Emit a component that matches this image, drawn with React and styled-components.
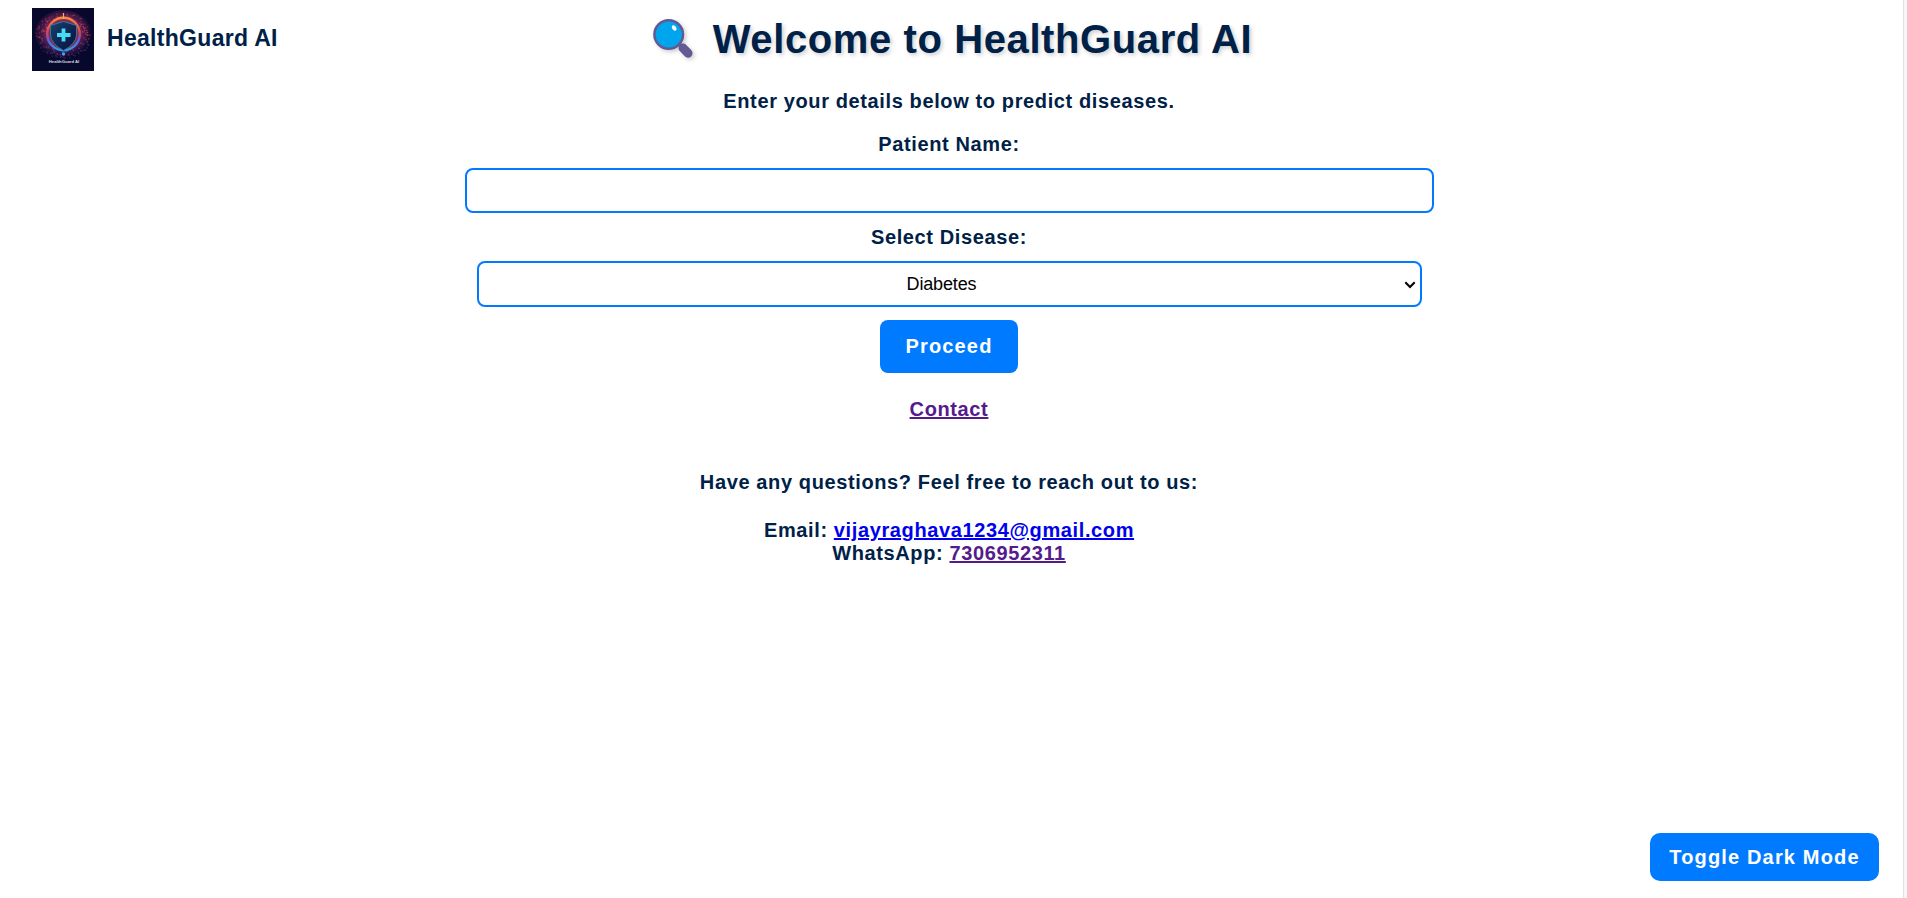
import React from "react";
import styled, { createGlobalStyle } from "styled-components";

const navy = "#002147";
const blue = "#007bff";

const GlobalStyle = createGlobalStyle`
  body {
    margin: 0;
    background: #fff;
    color: ${navy};
    font-family: "Liberation Sans", Arial, sans-serif;
    font-size: 20px;
    font-weight: bold;
    letter-spacing: 0.62px;
    line-height: 23px;
    overflow: hidden;
  }
`;

const Page = styled.div`
  display: flex;
  height: 898px;
`;

const Content = styled.main`
  flex: 1;
  display: flex;
  flex-direction: column;
  align-items: center;
  padding-right: 5px;
`;

const Gutter = styled.div`
  width: 4px;
  box-sizing: border-box;
  background: #f7f7f7;
  border-left: 1px solid #e2e2e2;
`;

const Header = styled.header`
  width: 100%;
  height: 90px;
  display: grid;
  grid-template-columns: 1fr auto 1fr;
  align-items: start;
`;

const Brand = styled.div`
  display: flex;
  align-items: flex-start;
  gap: 13px;
  padding: 8px 0 0 32px;
`;

const BrandName = styled.span`
  padding-top: 16px;
  font-size: 23px;
  line-height: 28px;
  letter-spacing: 0.3px;
`;

const Title = styled.h1`
  display: flex;
  gap: 20px;
  margin: 16px 0 0;
  padding-left: 7px;
  font-size: 40px;
  line-height: 46px;
  letter-spacing: 0.6px;
  text-shadow: 2px 2px 4px rgba(0, 0, 0, 0.2);
`;

const Lens = styled.svg`
  margin-top: 2px;
  overflow: visible;
  filter: drop-shadow(2px 2px 2px rgba(0, 0, 0, 0.2));
`;

const Text = styled.p`
  margin: 0 0 ${(p) => p.$gap}px;
  text-align: center;
`;

const Form = styled.form`
  width: 969px;
  display: flex;
  flex-direction: column;
  align-items: center;
`;

const Label = styled.label`
  margin-bottom: 12px;
`;

const Input = styled.input`
  box-sizing: border-box;
  width: 969px;
  height: 45px;
  margin: 0 0 13px;
  padding: 10px;
  border: 2px solid ${blue};
  border-radius: 8px;
  background: #fff;
  font: 18px "Liberation Sans", Arial, sans-serif;
  text-align: center;
  outline: none;
`;

const SelectBox = styled.div`
  position: relative;
  width: 945px;
  height: 46px;
  margin-bottom: 13px;
`;

const Select = styled.select`
  appearance: none;
  box-sizing: border-box;
  width: 100%;
  height: 100%;
  margin: 0;
  padding: 10px 25px 10px 10px;
  border: 2px solid ${blue};
  border-radius: 8px;
  background: #fff;
  color: #000;
  font: 18px "Liberation Sans", Arial, sans-serif;
  letter-spacing: -0.14px;
  text-align: center;
`;

const Chevron = styled.svg`
  position: absolute;
  right: 6px;
  top: 20px;
  pointer-events: none;
`;

const Button = styled.button`
  padding: 0;
  border: none;
  background: ${blue};
  color: #fff;
  font: bold 20px/23px "Liberation Sans", Arial, sans-serif;
  letter-spacing: 1.16px;
  cursor: pointer;
`;

const Proceed = styled(Button)`
  width: 138px;
  height: 53px;
  margin-bottom: 25px;
  border-radius: 8px;
`;

const Toggle = styled(Button)`
  position: fixed;
  right: 28px;
  bottom: 17px;
  width: 229px;
  height: 48px;
  border-radius: 10px;
`;

const Link = styled.a`
  color: ${(p) => (p.$seen ? "#551a8b" : "#0000ee")};
  text-decoration: underline;
`;

function Logo() {
  const sparks = [];
  for (let i = 0; i < 130; i++) {
    const a = i * 2.39996 + Math.sin(i * 5.3) * 0.4;
    const r = 17 + ((i * i * 7) % 23) * 0.5;
    const x = 31 + Math.cos(a) * r;
    const y = 27 + Math.sin(a) * r * 0.8;
    const warm = y < 33;
    sparks.push(
      <rect
        key={i}
        x={x.toFixed(1)}
        y={y.toFixed(1)}
        width="1.4"
        height="1.4"
        fill={warm ? (i % 2 ? "#e0484c" : "#a5305c") : i % 2 ? "#8a3590" : "#2d4eae"}
        opacity={r > 24 ? 0.45 : 0.75}
      />
    );
  }
  return (
    <svg width="62" height="63" viewBox="0 0 62 63">
      <defs>
        <radialGradient id="glow" cx="50%" cy="45%" r="50%">
          <stop offset="0.5" stopColor="#8d2d52" />
          <stop offset="0.7" stopColor="#4a1c4c" />
          <stop offset="1" stopColor="#07082b" />
        </radialGradient>
        <linearGradient id="ring" x1="0" y1="0" x2="0" y2="1">
          <stop offset="0" stopColor="#ff8a3c" />
          <stop offset="0.45" stopColor="#d8405c" />
          <stop offset="0.7" stopColor="#5a62df" />
          <stop offset="1" stopColor="#23a6f0" />
        </linearGradient>
        <linearGradient id="shield" x1="0" y1="0" x2="1" y2="1">
          <stop offset="0" stopColor="#17436b" />
          <stop offset="0.6" stopColor="#0e2150" />
          <stop offset="1" stopColor="#0a1238" />
        </linearGradient>
        <filter id="soft" x="-20%" y="-20%" width="140%" height="140%">
          <feGaussianBlur stdDeviation="0.7" />
        </filter>
      </defs>
      <rect width="62" height="63" fill="#07082b" />
      <ellipse cx="31" cy="27" rx="29" ry="25" fill="url(#glow)" />
      {sparks}
      <circle
        cx="31.5"
        cy="26"
        r="16.3"
        fill="#7c2f55"
        stroke="url(#ring)"
        strokeWidth="2.4"
        filter="url(#soft)"
      />
      <path d="M31.5 5v6" stroke="#ffae4d" strokeWidth="1.2" />
      <path
        d="M31.5 13.500L44.500 17.500V27Q44 36 31.500 42.500Q19 36 18.500 27V17.500Z"
        fill="url(#shield)"
        stroke="#33769b"
        strokeWidth="1"
      />
      <path d="M31.5 20.500v13M25 27h13.500" stroke="#48dcf4" strokeWidth="3.800" />
      <circle cx="31.5" cy="46" r="1.700" fill="#39a9ee" />
      <text
        x="32"
        y="55"
        textAnchor="middle"
        fontSize="4.200"
        fontWeight="bold"
        letterSpacing="0"
        fill="#d4d8e8"
      >
        HealthGuard AI
      </text>
    </svg>
  );
}

function Magnifier() {
  return (
    <Lens width="40" height="41" viewBox="0 0 40 41">
      <path d="M25 25l3 3" stroke="#635994" strokeWidth="4" />
      <path d="M30 30l5 5.200" stroke="#635994" strokeWidth="9" strokeLinecap="round" />
      <circle cx="15.700" cy="16.500" r="14.300" fill="#00a6ed" stroke="#635994" strokeWidth="2.500" />
      <ellipse cx="21.200" cy="10" rx="2" ry="2.900" transform="rotate(-32 21.200 10)" fill="#fff" />
    </Lens>
  );
}

export default function App() {
  return (
    <Page>
      <GlobalStyle />
      <Content>
        <Header>
          <Brand>
            <Logo />
            <BrandName>HealthGuard AI</BrandName>
          </Brand>
          <Title>
            <Magnifier />
            <span>Welcome to HealthGuard AI</span>
          </Title>
        </Header>
        <Text $gap={20}>Enter your details below to predict diseases.</Text>
        <Form onSubmit={(e) => e.preventDefault()}>
          <Label htmlFor="patient">Patient Name:</Label>
          <Input id="patient" type="text" />
          <Label htmlFor="disease">Select Disease:</Label>
          <SelectBox>
            <Select id="disease" defaultValue="Diabetes">
              <option>Diabetes</option>
            </Select>
            <Chevron width="12" height="8" viewBox="0 0 12 8">
              <path d="M1.300 1.300L6 6l4.700-4.700" fill="none" stroke="#000" strokeWidth="2" />
            </Chevron>
          </SelectBox>
          <Proceed type="submit">Proceed</Proceed>
        </Form>
        <Text $gap={50}>
          <Link href="#contact" $seen>
            Contact
          </Link>
        </Text>
        <Text $gap={25}>Have any questions? Feel free to reach out to us:</Text>
        <Text $gap={0}>
          Email: <Link href="mailto:vijayraghava1234@gmail.com">vijayraghava1234@gmail.com</Link>
          <br />
          WhatsApp:{" "}
          <Link href="#whatsapp" $seen>
            7306952311
          </Link>
        </Text>
      </Content>
      <Gutter />
      <Toggle type="button">Toggle Dark Mode</Toggle>
    </Page>
  );
}
